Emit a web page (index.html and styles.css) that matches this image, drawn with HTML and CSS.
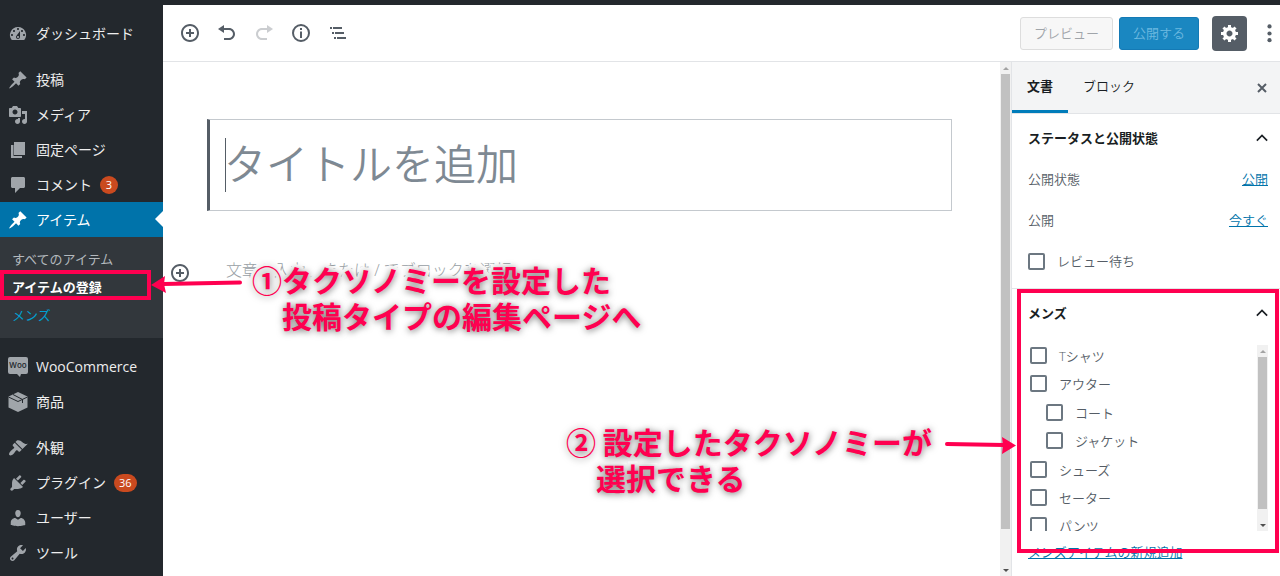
FILE: index.html
```html
<!DOCTYPE html>
<html lang="ja">
<head>
   <meta charset="utf-8">
   <title>アイテムの登録</title>
   <link rel="stylesheet" href="styles.css">
</head>
<body>
<div class="admin-bar"></div>
<div class="wrap">
   <nav class="admin-menu">
      <ul class="menu">
         <li><a href="#"><svg viewBox="0 0 20 20"><path fill-rule="evenodd" d="M3.76 16h12.48A7.998 7.998 0 0 0 10 3a7.998 7.998 0 0 0-6.24 13zM10 4c.55 0 1 .45 1 1s-.45 1-1 1-1-.45-1-1 .45-1 1-1zM6 6c.55 0 1 .45 1 1s-.45 1-1 1-1-.45-1-1 .45-1 1-1zm8 0c.55 0 1 .45 1 1s-.45 1-1 1-1-.45-1-1 .45-1 1-1zm-5.37 5.55L12 7v6c0 1.1-.9 2-2 2s-2-.9-2-2c0-.57.24-1.08.63-1.45zM4 10c.55 0 1 .45 1 1s-.45 1-1 1-1-.45-1-1 .45-1 1-1zm12 0c.55 0 1 .45 1 1s-.45 1-1 1-1-.45-1-1 .45-1 1-1zm-5 3c0-.55-.45-1-1-1s-1 .45-1 1 .45 1 1 1 1-.45 1-1z"/></svg>ダッシュボード</a></li>
         <li class="separator"></li>
         <li><a href="#"><svg viewBox="0 0 20 20"><path d="M10.44 3.02l1.82-1.82 6.36 6.35-1.83 1.82c-1.05-.68-2.48-.57-3.41.36l-.75.75c-.92.93-1.04 2.35-.35 3.41l-1.83 1.82-2.41-2.41-2.8 2.79c-.42.42-3.38 2.71-3.8 2.29s1.86-3.39 2.28-3.81l2.79-2.79L4.1 9.36l1.83-1.82c1.05.69 2.48.57 3.4-.36l.75-.75c.93-.92 1.05-2.35.36-3.41z"/></svg>投稿</a></li>
         <li><a href="#"><svg viewBox="0 0 20 20"><path fill-rule="evenodd" d="M13 11V4c0-.55-.45-1-1-1h-1.67L9 1H5L3.67 3H2c-.55 0-1 .45-1 1v7c0 .55.45 1 1 1h10c.55 0 1-.45 1-1zM7 4.5c1.38 0 2.5 1.12 2.5 2.5S8.38 9.5 7 9.5 4.5 8.38 4.5 7 5.62 4.5 7 4.5zM14 6h5v10.5c0 1.38-1.12 2.5-2.5 2.5S14 17.88 14 16.5s1.12-2.5 2.5-2.5c.17 0 .34.02.5.05V9h-3V6zm-4 8.05V13h2v3.5c0 1.38-1.12 2.5-2.5 2.5S7 17.88 7 16.5 8.12 14 9.5 14c.17 0 .34.02.5.05z"/></svg>メディア</a></li>
         <li><a href="#"><svg viewBox="0 0 20 20"><path d="M6 15V2h11v13H6zm-.5 1H14v2H3V5h2.500v11z"/></svg>固定ページ</a></li>
         <li><a href="#"><svg viewBox="0 0 20 20"><path d="M4.5 2h11c.8 0 1.5.7 1.5 1.5v8c0 .8-.7 1.5-1.5 1.5H12l-5 5v-5H4.5C3.7 13 3 12.3 3 11.5v-8C3 2.7 3.7 2 4.500 2z"/></svg>コメント<span class="count">3</span></a></li>
         <li class="current">
            <a href="#"><svg viewBox="0 0 20 20"><path d="M10.44 3.02l1.82-1.82 6.36 6.35-1.83 1.82c-1.05-.68-2.48-.57-3.41.36l-.75.75c-.92.93-1.04 2.35-.35 3.41l-1.83 1.82-2.41-2.41-2.8 2.79c-.42.42-3.38 2.71-3.8 2.29s1.86-3.39 2.28-3.81l2.79-2.79L4.1 9.36l1.83-1.82c1.05.69 2.48.57 3.4-.36l.75-.75c.93-.92 1.05-2.35.36-3.41z"/></svg>アイテム</a>
            <ul class="submenu">
               <li><a href="#">すべてのアイテム</a></li>
               <li class="marked"><a href="#" class="active">アイテムの登録</a></li>
               <li><a href="#" class="hover">メンズ</a></li>
            </ul>
         </li>
         <li class="separator"></li>
         <li><a href="#"><svg viewBox="0 0 20 20"><path d="M2 0h16q2 0 2 2v13q0 2-2 2h-5l-1 3-3-3H2q-2 0-2-2V2q0-2 2-2z"/><text x="10" y="11" class="woo">Woo</text></svg>WooCommerce</a></li>
         <li><a href="#"><svg viewBox="0 0 20 20"><path d="M10 0l9.5 4.5v11L10 20 .5 15.5v-11z"/><path class="cut" d="M.5 5L10 9.500 19.500 5M5 2.500l9.500 5v3.500"/></svg>商品</a></li>
         <li class="separator"></li>
         <li><a href="#"><svg viewBox="0 0 20 20"><path d="M14.48 11.06L7.41 3.99l1.5-1.5c.5-.56 2.3-.47 3.51.32 1.21.8 1.43 1.28 2.91 2.1 1.18.64 2.45 1.26 4.45.85zm-.71.71L6.7 4.7 4.93 6.47c-.39.39-.39 1.02 0 1.41l1.06 1.06c.39.39.39 1.03 0 1.42-.6.6-1.43 1.11-2.21 1.69-.35.26-.7.53-1.01.84C1.43 14.23.4 16.08 1.4 17.07c.99 1 2.84-.03 4.18-1.36.31-.31.58-.66.85-1.02.57-.78 1.08-1.61 1.69-2.21.39-.39 1.02-.39 1.41 0l1.06 1.06c.39.39 1.02.39 1.41 0z"/></svg>外観</a></li>
         <li><a href="#"><svg viewBox="0 0 20 20"><path d="M13.11 4.36L9.87 7.6 8 5.73l3.24-3.24c.35-.34 1.05-.2 1.56.32.52.51.66 1.21.31 1.55zm-8 1.77l.91-1.12 9.01 9.01-1.19.84c-.71.71-2.63 1.16-3.82 1.16H6.14L4.9 17.26c-.59.59-1.54.59-2.12 0-.59-.58-.59-1.53 0-2.12l1.24-1.24v-3.88c0-1.13.4-3.19 1.09-3.89zm7.26 3.97l3.24-3.24c.34-.35 1.04-.21 1.55.31.52.51.66 1.21.31 1.55l-3.24 3.25z"/></svg>プラグイン<span class="count">36</span></a></li>
         <li><a href="#"><svg viewBox="0 0 20 20"><path d="M10 9.25c-2.27 0-2.73-3.44-2.73-3.44C7 4.02 7.82 2 9.97 2c2.16 0 2.98 2.02 2.71 3.81 0 0-.41 3.44-2.68 3.44zm0 2.57L12.72 10c2.39 0 4.52 2.33 4.52 4.53v2.49s-3.65 1.13-7.24 1.13c-3.65 0-7.24-1.13-7.24-1.13v-2.49c0-2.25 1.94-4.48 4.47-4.48z"/></svg>ユーザー</a></li>
         <li><a href="#"><svg viewBox="0 0 20 20"><path fill-rule="evenodd" d="M16.68 9.77c-1.34 1.34-3.3 1.67-4.95.99l-5.41 6.52c-.99.99-2.59.99-3.58 0s-.99-2.59 0-3.57l6.52-5.42c-.68-1.65-.35-3.61.99-4.95 1.28-1.28 3.12-1.62 4.72-1.06l-2.89 2.89 2.82 2.82 2.86-2.87c.53 1.58.18 3.39-1.08 4.65zM3.81 16.21c.4.39 1.04.39 1.43 0 .4-.4.4-1.04 0-1.43-.39-.4-1.03-.4-1.43 0-.39.39-.39 1.03 0 1.43z"/></svg>ツール</a></li>
      </ul>
   </nav>

   <div class="editor">
      <header class="toolbar">
         <div class="tools">
            <button title="ブロックの追加"><svg viewBox="0 0 20 20"><path d="M10 1c-5 0-9 4-9 9s4 9 9 9 9-4 9-9-4-9-9-9zm0 16c-3.9 0-7-3.1-7-7s3.1-7 7-7 7 3.1 7 7-3.1 7-7 7zm1-11H9v3H6v2h3v3h2v-3h3V9h-3V6z"/></svg></button>
            <button title="元に戻す"><svg viewBox="0 0 20 20"><path d="M12 5H7V2L1 6l6 4V7h5c2.2 0 4 1.8 4 4s-1.8 4-4 4H7v2h5c3.3 0 6-2.7 6-6s-2.7-6-6-6z"/></svg></button>
            <button title="やり直す" disabled><svg viewBox="0 0 20 20"><path d="M8 5h5V2l6 4-6 4V7H8c-2.2 0-4 1.8-4 4s1.8 4 4 4h5v2H8c-3.3 0-6-2.7-6-6s2.7-6 6-6z"/></svg></button>
            <button title="コンテンツ構造"><svg viewBox="0 0 20 20"><path fill-rule="evenodd" d="M10 1a9 9 0 1 0 0 18 9 9 0 0 0 0-18zm0 2a7 7 0 1 1 0 14 7 7 0 0 1 0-14zM9 5h2v2H9zm0 3.5h2V15H9z"/></svg></button>
            <button title="ブロックナビゲーション"><svg viewBox="0 0 20 20"><path d="M2 4h2v2H2zm3 0h9v2H5zM4 9h2v2H4zm3 0h9v2H7zM6 14h2v2H6zm3 0h9v2H9z"/></svg></button>
         </div>
         <div class="actions">
            <button class="btn preview">プレビュー</button>
            <button class="btn publish">公開する</button>
            <button class="gear" title="設定"><svg viewBox="0 0 20 20"><path fill-rule="evenodd" d="M18 12h-2.18c-.17.7-.44 1.35-.81 1.93l1.54 1.54-2.1 2.1-1.54-1.54c-.58.36-1.23.63-1.91.79V19H8v-2.18c-.68-.16-1.33-.43-1.91-.79l-1.54 1.54-2.12-2.12 1.54-1.54c-.36-.58-.63-1.23-.79-1.91H1V9.03h2.17c.16-.7.44-1.35.8-1.94L2.43 5.55l2.1-2.1 1.54 1.54c.58-.37 1.24-.64 1.93-.81V2h3v2.18c.68.16 1.33.43 1.91.79l1.54-1.54 2.12 2.12-1.54 1.54c.36.59.64 1.24.8 1.94H18V12zm-8.500 1.500c1.660 0 3-1.340 3-3s-1.340-3-3-3-3 1.340-3 3 1.340 3 3 3z"/></svg></button>
            <button class="more" title="ツールと設定をさらに表示"><svg viewBox="0 0 20 20"><circle cx="10" cy="2.5" r="2.2"/><circle cx="10" cy="10" r="2.2"/><circle cx="10" cy="17" r="2.2"/></svg></button>
         </div>
      </header>

      <div class="workspace">
         <main class="content">
            <div class="title-box"><input type="text" aria-label="タイトルを追加" placeholder="タイトルを追加"></div>
            <div class="block">
               <button title="ブロックの追加"><svg viewBox="0 0 20 20"><path d="M10 1c-5 0-9 4-9 9s4 9 9 9 9-4 9-9-4-9-9-9zm0 16c-3.9 0-7-3.1-7-7s3.1-7 7-7 7 3.1 7 7-3.1 7-7 7zm1-11H9v3H6v2h3v3h2v-3h3V9h-3V6z"/></svg></button>
               <input type="text" aria-label="ブロック" placeholder="文章を入力、または / でブロックを選択">
            </div>
         </main>
         <div class="scrollbar page-scroll"><i class="up"></i><b></b><i class="down"></i></div>

         <aside class="settings">
            <div class="tabs">
               <button class="tab selected">文書</button>
               <button class="tab">ブロック</button>
               <button class="close" title="設定を閉じる"><svg viewBox="0 0 12 12"><path d="M2 2l8 8M10 2l-8 8"/></svg></button>
            </div>
            <section class="panel">
               <h2><button>ステータスと公開状態<svg viewBox="0 0 14 14"><path d="M1 10l6-6 6 6"/></svg></button></h2>
               <div class="rows">
                  <div class="row"><span>公開状態</span><a href="#">公開</a></div>
                  <div class="row"><span>公開</span><a href="#">今すぐ</a></div>
                  <label class="check"><input type="checkbox">レビュー待ち</label>
               </div>
            </section>
            <section class="panel framed">
               <h2><button>メンズ<svg viewBox="0 0 14 14"><path d="M1 10l6-6 6 6"/></svg></button></h2>
               <div class="terms">
                  <ul>
                     <li><label class="check"><input type="checkbox">Tシャツ</label></li>
                     <li><label class="check"><input type="checkbox">アウター</label>
                        <ul>
                           <li><label class="check"><input type="checkbox">コート</label></li>
                           <li><label class="check"><input type="checkbox">ジャケット</label></li>
                        </ul>
                     </li>
                     <li><label class="check"><input type="checkbox">シューズ</label></li>
                     <li><label class="check"><input type="checkbox">セーター</label></li>
                     <li><label class="check"><input type="checkbox">パンツ</label></li>
                  </ul>
                  <div class="scrollbar"><i class="up"></i><b></b><i class="down"></i></div>
               </div>
               <a class="add-term" href="#">メンズアイテムの新規追加</a>
            </section>
         </aside>
      </div>
   </div>
</div>

<!-- callouts -->
<svg class="arrow arrow-left" viewBox="0 0 92 26"><path d="M89 11.500L12 13" class="line"/><path d="M0 14L14 5l-1 8 2 9z"/></svg>
<p class="note note-1">①タクソノミーを設定した<br>　投稿タイプの編集ページへ</p>
<p class="note note-2">② 設定したタクソノミーが<br>　選択できる</p>
<svg class="arrow arrow-right" viewBox="0 0 72 20"><path d="M3 9l57 1" class="line"/><path d="M72 10.500L58 19l1-8.500L58 2z"/></svg>
</body>
</html>
```
FILE: styles.css
```css
*, *::before, *::after {
   box-sizing: border-box;
}
body {
   margin: 0;
   height: 100vh;
   display: flex;
   flex-direction: column;
   overflow: hidden;
   position: relative;
   background: #fff;
   color: #555d66;
   font-family: "Open Sans", "Noto Sans CJK JP", sans-serif;
   font-size: 13px;
   line-height: 20px;
}
ul, h2, p {
   margin: 0;
   padding: 0;
   list-style: none;
}
button {
   border: 0;
   padding: 0;
   background: none;
   color: inherit;
   font: inherit;
   cursor: pointer;
}
svg {
   fill: currentColor;
   flex: none;
}
.admin-bar {
   height: 5px;
   flex: none;
   background: #23282d;
}
.wrap {
   flex: 1;
   display: flex;
   min-height: 0;
}

/* left menu */
.admin-menu {
   width: 163px;
   flex: none;
   padding-top: 11px;
   background: #23282d;
}
.menu > li > a {
   display: flex;
   align-items: center;
   gap: 8px;
   height: 35px;
   padding-left: 8px;
   color: #eee;
   font-size: 14px;
   text-decoration: none;
}
.menu svg {
   width: 20px;
   height: 20px;
   color: #a0a5aa;
   overflow: visible;
}
.menu .woo {
   fill: #23282d;
   font-size: 8px;
   font-weight: 600;
   text-anchor: middle;
}
.menu .cut {
   fill: none;
   stroke: #23282d;
   stroke-width: 1;
}
.separator {
   height: 11px;
}
.count {
   min-width: 18px;
   height: 18px;
   padding: 0 5px;
   border-radius: 9px;
   background: #ca4a1f;
   color: #fff;
   font-size: 11px;
   line-height: 18px;
   text-align: center;
}
.menu > .current > a {
   position: relative;
   background: #0073aa;
   color: #fff;
}
.current > a svg {
   color: #fff;
}
.current > a::after {
   content: "";
   position: absolute;
   right: 0;
   top: 9px;
   border: 8px solid transparent;
   border-left: 0;
   border-right-color: #fff;
}
.submenu {
   padding: 8px 0 9px;
   background: #32373c;
}
.submenu li {
   position: relative;
}
.submenu a {
   display: block;
   padding-left: 12px;
   color: #b4b9be;
   line-height: 28px;
   text-decoration: none;
}
.submenu .active {
   color: #fff;
   font-weight: bold;
}
.submenu .hover {
   color: #00a0d2;
}
.marked::after {
   content: "";
   position: absolute;
   top: -3px;
   bottom: 1px;
   left: 0;
   right: 12px;
   border: 4px solid #ff0050;
}

/* toolbar */
.editor {
   flex: 1;
   min-width: 0;
   display: flex;
   flex-direction: column;
}
.toolbar {
   height: 57px;
   flex: none;
   display: flex;
   align-items: center;
   justify-content: space-between;
   padding-left: 9px;
   border-bottom: 1px solid #e2e4e7;
}
.tools, .actions {
   display: flex;
   align-items: center;
}
.tools {
   gap: 1px;
}
.tools button {
   width: 36px;
   height: 36px;
   display: grid;
   place-items: center;
   color: #555d66;
}
.tools button:disabled {
   opacity: .3;
}
.tools svg, .gear svg, .block svg {
   width: 20px;
   height: 20px;
   display: block;
}
.btn {
   height: 33px;
   padding: 0 13px;
   border: 1px solid #ddd;
   border-radius: 3px;
   background: #f7f7f7;
   color: #a0a5aa;
   font-weight: 350;
}
.publish {
   margin: 0 13px 0 6px;
   border-color: #147ab5;
   background: #1a87c1;
   color: #6db9e0;
}
.gear {
   width: 35px;
   height: 35px;
   display: grid;
   place-items: center;
   border-radius: 4px;
   background: #555d66;
   color: #fff;
}
.more {
   margin-left: 12px;
}
.more svg {
   width: 21px;
   height: 19px;
   display: block;
}

/* post content */
.workspace {
   flex: 1;
   min-height: 0;
   display: flex;
}
.content {
   flex: 1;
   min-width: 0;
   padding-top: 57px;
}
.title-box {
   position: relative;
   margin: 0 48px 0 44px;
   padding: 12px 14px 16px;
   border: 1px solid #c4c9ce;
   border-left: 3px solid #555d66;
}
/* text cursor */
.title-box::before {
   content: "";
   position: absolute;
   left: 15px;
   top: 18px;
   bottom: 18px;
   border-left: 1px solid #555d66;
}
.content input {
   width: 100%;
   border: 0;
   padding: 0;
   outline: 0;
   background: none;
   font-family: inherit;
}
.title-box input {
   display: block;
   height: 62px;
   font-size: 42px;
}
.content input::placeholder {
   color: #7e8993;
   font-weight: 350;
}
.block {
   display: flex;
   gap: 36px;
   height: 23px;
   margin: 49px 48px 0 7px;
}
.block button {
   align-self: flex-end;
}
.block input {
   height: 20px;
   font-size: 16px;
}
.content .block input::placeholder {
   color: #999fa5;
   font-weight: 300;
}
.scrollbar {
   width: 11px;
   flex: none;
   display: flex;
   flex-direction: column;
   align-items: center;
   background: #f1f1f1;
}
.scrollbar b {
   width: 9px;
   flex: 1;
   background: #c1c1c1;
}
.scrollbar i {
   height: 12px;
   display: grid;
   place-items: center;
}
.scrollbar i::before {
   content: "";
   border: 3px solid transparent;
}
.scrollbar .up::before {
   border-top: 0;
   border-bottom-color: #a3a3a3;
}
.scrollbar .down::before {
   border-bottom: 0;
   border-top-color: #505050;
}
.scrollbar .down {
   margin-top: 10px;
}
.page-scroll .down {
   margin-top: 35px;
}

/* settings */
.settings {
   width: 269px;
   flex: none;
   border-left: 1px solid #e2e4e7;
   font-weight: 350;
}
.tabs {
   display: flex;
   height: 52px;
   border-bottom: 1px solid #e2e4e7;
   background: #f3f4f5;
}
.tab {
   padding: 0 15px;
   border-bottom: 3px solid transparent;
   color: #191e23;
}
.tab.selected {
   border-bottom-color: #007cba;
   font-weight: bold;
}
.close {
   margin: 0 12px 0 auto;
}
.close svg, .panel h2 svg {
   width: 12px;
   height: 12px;
   display: block;
   fill: none;
   stroke: currentColor;
   stroke-width: 2;
}
.panel {
   position: relative;
   padding: 0 12px 17px 16px;
   border-bottom: 1px solid #e2e4e7;
}
.panel h2 {
   font-size: 13px;
}
.panel h2 button {
   display: flex;
   align-items: center;
   justify-content: space-between;
   width: 100%;
   height: 48px;
   color: #191e23;
}
.rows {
   display: flex;
   flex-direction: column;
   gap: 21px;
   padding-top: 7px;
}
.row {
   display: flex;
   justify-content: space-between;
}
.settings a {
   color: #0073aa;
}
.check {
   display: flex;
   align-items: center;
   gap: 12px;
}
.check input {
   appearance: none;
   width: 17px;
   height: 17px;
   margin: 0;
   border: 2px solid #6c7781;
   border-radius: 2px;
}
.terms {
   display: flex;
   justify-content: space-between;
   height: 186px;
   margin-top: 8px;
   overflow: hidden;
}
.terms > ul {
   padding: 2px 0 0 2px;
}
.terms .check {
   height: 17px;
}
.terms li + li {
   margin-top: 11px;
}
.terms li ul {
   margin: 12px 0;
   padding-left: 16px;
}
.add-term {
   display: inline-block;
   margin-top: 11px;
}
.framed {
   border-bottom: 0;
}
.framed::after {
   content: "";
   position: absolute;
   top: 0;
   left: 5px;
   right: 1px;
   height: 264px;
   border: 4px solid #ff0050;
}

/* callouts */
.note {
   position: absolute;
   color: #ff0050;
   font-family: "Noto Sans CJK JP", sans-serif;
   font-size: 30px;
   font-weight: bold;
   line-height: 36px;
   white-space: nowrap;
   -webkit-text-stroke: 6px #fff;
   paint-order: stroke fill;
   text-shadow: 0 1px 7px rgba(0, 0, 0, .6);
}
.note-1 {
   left: 252px;
   top: 261px;
}
.note-2 {
   left: 566px;
   top: 423px;
}
.arrow {
   position: absolute;
   fill: #ff0050;
}
.arrow .line {
   stroke: #ff0050;
   stroke-width: 4;
   stroke-linecap: round;
}
.arrow-left {
   left: 151px;
   top: 271px;
   width: 92px;
   height: 26px;
}
.arrow-right {
   left: 944px;
   top: 435px;
   width: 72px;
   height: 20px;
}
```
